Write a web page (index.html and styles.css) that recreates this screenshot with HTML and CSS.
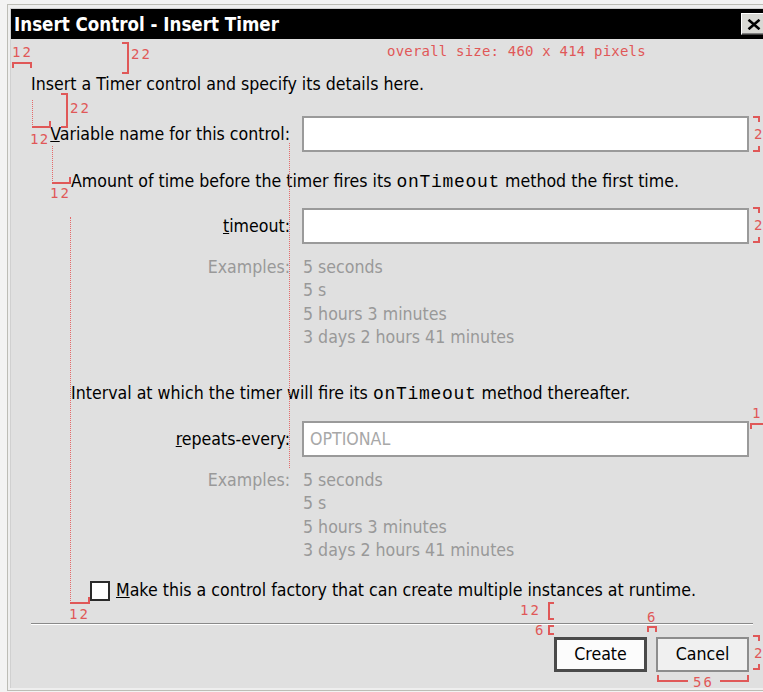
FILE: index.html
```html
<!DOCTYPE html>
<html lang="en">
<head>
<meta charset="utf-8">
<title>Insert Control - Insert Timer</title>
<link rel="stylesheet" href="styles.css">
</head>
<body>
<div class="screen">
  <div class="window">
    <div class="dialog">
      <div class="titlebar">
        <span class="title">Insert Control - Insert Timer</span>
        <button class="close" type="button" aria-label="Close">
          <svg width="14" height="11" viewBox="0 0 14 11"><path d="M1.5 0.8 L12.5 10.2 M12.5 0.8 L1.5 10.2" stroke="#000" stroke-width="2.6" fill="none"/></svg>
        </button>
      </div>

      <div class="content">
        <p class="intro">Insert a Timer control and specify its details here.</p>

        <div class="field field-name">
          <label class="field-label" for="var-name"><u>V</u>ariable name for this control:</label>
          <input class="text-input" id="var-name" type="text">
        </div>

        <p class="section section-first">Amount of time before the timer fires its <code>onTimeout</code> method the first time.</p>

        <div class="field field-timeout">
          <label class="field-label" for="timeout"><u>t</u>imeout:</label>
          <input class="text-input" id="timeout" type="text">
          <span class="examples-label">Examples:</span>
          <ul class="examples">
            <li>5 seconds</li>
            <li>5 s</li>
            <li>5 hours 3 minutes</li>
            <li>3 days 2 hours 41 minutes</li>
          </ul>
        </div>

        <p class="section section-repeat">Interval at which the timer will fire its <code>onTimeout</code> method thereafter.</p>

        <div class="field field-repeat">
          <label class="field-label" for="repeats"><u>r</u>epeats-every:</label>
          <input class="text-input" id="repeats" type="text" placeholder="OPTIONAL">
          <span class="examples-label">Examples:</span>
          <ul class="examples">
            <li>5 seconds</li>
            <li>5 s</li>
            <li>5 hours 3 minutes</li>
            <li>3 days 2 hours 41 minutes</li>
          </ul>
        </div>

        <label class="factory">
          <span class="checkbox"></span>
          <span><u>M</u>ake this a control factory that can create multiple instances at runtime.</span>
        </label>
      </div>

      <div class="separator"></div>

      <div class="buttons">
        <button class="btn btn-default" type="button">Create</button>
        <button class="btn" type="button">Cancel</button>
      </div>
    </div>
  </div>

  <!-- spacing redlines drawn over the dialog -->
  <div class="redlines" aria-hidden="true">
    <span class="rl-num n-side-title">12</span>
    <span class="rl-br t l r b-side-title"></span>
    <span class="rl-br t r b b-top-title"></span>
    <span class="rl-num n-top-title">22</span>
    <span class="rl-num n-size">overall size: 460 x 414 pixels</span>

    <span class="rl-dot d-intro"></span>
    <span class="rl-br b r b-indent-name"></span>
    <span class="rl-br t r b b-gap-name"></span>
    <span class="rl-num n-gap-name">22</span>
    <span class="rl-num n-indent-name">12</span>

    <span class="rl-dot d-labels"></span>
    <span class="rl-dot d-name"></span>
    <span class="rl-br b r b-indent-section"></span>
    <span class="rl-num n-indent-section">12</span>

    <span class="rl-dot d-section"></span>
    <span class="rl-br b r b-indent-check"></span>
    <span class="rl-num n-indent-check">12</span>

    <span class="rl-num n-sep-above">12</span>
    <span class="rl-br t l b b-sep-above"></span>
    <span class="rl-num n-sep-below">6</span>
    <span class="rl-br t l b b-sep-below"></span>
    <span class="rl-num n-btn-gap">6</span>
    <span class="rl-br t l r b-btn-gap"></span>

    <span class="rl-br t r b-edge-top e-name"></span>
    <span class="rl-num n-edge e-name-n">2</span>
    <span class="rl-br b r b-edge-bottom e-name-b"></span>

    <span class="rl-br t r b-edge-top e-timeout"></span>
    <span class="rl-num n-edge e-timeout-n">2</span>
    <span class="rl-br b r b-edge-bottom e-timeout-b"></span>

    <span class="rl-num n-repeat">1</span>
    <span class="rl-br t l b-repeat"></span>

    <span class="rl-br t r b-edge-top e-btn"></span>
    <span class="rl-num n-edge e-btn-n">2</span>
    <span class="rl-br b r b-edge-bottom e-btn-b"></span>

    <span class="rl-br l b b-width-left"></span>
    <span class="rl-num n-width">56</span>
    <span class="rl-br r b b-width-right"></span>
  </div>
</div>
</body>
</html>
```

FILE: styles.css
```css
* { box-sizing: border-box; }

html, body {
  margin: 0;
  padding: 0;
}

body {
  width: 763px;
  height: 692px;
  overflow: hidden;
  background: #f3f3f3;
  font-family: "DejaVu Sans Condensed", "Liberation Sans", sans-serif;
  font-size: 17.6px;
  line-height: 23px;
  color: #000;
}

.screen {
  position: relative;
  width: 763px;
  height: 692px;
  overflow: hidden;
}

/* window frame */
.window {
  margin: 4px 0 0 7px;
  width: 762px;
  height: 687px;
  border: 1px solid #bdbdb6;
  padding: 3px 0 2px 2px;
  background: #efefef;
  display: flex;
}

.dialog {
  width: 758px;
  border-top: 1px solid #d0d0d0;
  border-left: 1px solid #d0d0d0;
  background: #e0e0e0;
  display: flex;
  flex-direction: column;
}

.titlebar {
  height: 30px;
  flex: none;
  background: #000;
  color: #fff;
  display: flex;
  align-items: center;
  justify-content: space-between;
  padding: 0 1px 0 3px;
  font-weight: bold;
  font-size: 18.6px;
}

.close {
  width: 26px;
  height: 22px;
  padding: 0;
  border: 1px solid;
  border-color: #fff #404040 #404040 #fff;
  box-shadow: inset -1px -1px 0 #808080;
  background: #d8d8d4;
  display: flex;
  align-items: center;
  justify-content: center;
}

.close svg { display: block; margin-top: 1px; }

/* form body */
.content {
  padding: 34px 19px 0 20px;
}

.content p { margin: 0; }

.intro { margin-bottom: 20px !important; }

.section { margin-left: 40px !important; }
.section-first { margin-top: 18px !important; }
.section-repeat { margin-top: 33px !important; }

code {
  font-family: "Liberation Mono", "DejaVu Sans Mono", monospace;
  font-size: 18px;
  letter-spacing: 0.7px;
}

.field {
  display: grid;
  grid-template-columns: 259px 447px;
  column-gap: 12px;
  row-gap: 12px;
  align-items: center;
}

.field-timeout { margin-top: 14px; }
.field-repeat { margin-top: 15px; }

.field-label {
  justify-self: end;
  white-space: nowrap;
}

.text-input {
  height: 36px;
  width: 447px;
  margin: 0;
  border: 2px solid #9a9a9a;
  background: #fff;
  padding: 0 6px;
  font: inherit;
  color: #000;
  outline: none;
}

.text-input::placeholder { color: #a8a8a8; }

.examples-label {
  align-self: start;
  justify-self: end;
  color: #999;
}

.examples {
  align-self: start;
  margin: 0;
  padding: 0 0 0 1px;
  list-style: none;
  color: #999;
  line-height: 23.3px;
}

.factory {
  display: flex;
  align-items: center;
  gap: 6px;
  margin: 17px 0 0 59px;
}

.checkbox {
  width: 20px;
  height: 20px;
  flex: none;
  border: 2px solid #2a2a2a;
  background: #fff;
}

.separator {
  height: 2px;
  margin: 21px 15px 0 20px;
  border-top: 1px solid #8a8a8a;
  border-bottom: 1px solid #fff;
}

.buttons {
  display: flex;
  justify-content: flex-end;
  gap: 9px;
  margin-top: 12px;
  padding-right: 19px;
}

.btn {
  width: 93px;
  height: 35px;
  margin: 0;
  padding: 0;
  font: inherit;
  color: #000;
  background: #f0f0f0;
  border: 2px solid #8c8c8c;
}

.btn-default {
  background: #fcfcfc;
  border: 3px solid #4a4a4a;
}

/* redlines */
.redlines {
  position: absolute;
  inset: 0;
  pointer-events: none;
}

.rl-num {
  position: absolute;
  font-family: "DejaVu Sans Mono", "Liberation Mono", monospace;
  font-size: 14px;
  line-height: 14px;
  letter-spacing: 2px;
  color: #e05858;
  white-space: nowrap;
}

.rl-br {
  position: absolute;
  border: 0 solid #e05858;
}
.rl-br.t { border-top-width: 2px; }
.rl-br.r { border-right-width: 2px; }
.rl-br.b { border-bottom-width: 2px; }
.rl-br.l { border-left-width: 2px; }

.rl-dot {
  position: absolute;
  width: 0;
  border-left: 1px dotted #e46a6a;
}

.n-side-title { left: 12px; top: 45px; }
.b-side-title { left: 12px; top: 62px; width: 20px; height: 6px; }
.b-top-title { left: 122px; top: 42px; width: 7px; height: 32px; }
.n-top-title { left: 131px; top: 47px; }
.n-size { left: 387px; top: 44px; letter-spacing: 0.2px; }

.d-intro { left: 32px; top: 100px; height: 27px; }
.b-indent-name { left: 32px; top: 121px; width: 19px; height: 7px; }
.b-gap-name { left: 61px; top: 93px; width: 7px; height: 35px; }
.n-gap-name { left: 70px; top: 101px; }
.n-indent-name { left: 30px; top: 132px; letter-spacing: 1.2px; }

.d-labels { left: 289px; top: 143px; height: 325px; }
.d-name { left: 52px; top: 146px; height: 37px; }
.b-indent-section { left: 52px; top: 177px; width: 19px; height: 7px; }
.n-indent-section { left: 50px; top: 186px; }

.d-section { left: 70px; top: 217px; height: 386px; }
.b-indent-check { left: 70px; top: 597px; width: 20px; height: 7px; }
.n-indent-check { left: 69px; top: 607px; }

.n-sep-above { left: 520px; top: 603px; }
.b-sep-above { left: 548px; top: 602px; width: 6px; height: 18px; }
.n-sep-below { left: 535px; top: 623px; }
.b-sep-below { left: 548px; top: 625px; width: 6px; height: 10px; }
.n-btn-gap { left: 647px; top: 610px; }
.b-btn-gap { left: 647px; top: 626px; width: 10px; height: 6px; }

.b-edge-top { left: 753px; width: 7px; height: 6px; }
.b-edge-bottom { left: 753px; width: 7px; height: 6px; }
.n-edge { left: 754px; }

.e-name { top: 116px; }
.e-name-n { top: 127px; }
.e-name-b { top: 146px; }

.e-timeout { top: 207px; }
.e-timeout-n { top: 218px; }
.e-timeout-b { top: 237px; }

.e-btn { top: 635px; }
.e-btn-n { top: 646px; }
.e-btn-b { top: 664px; }

.n-repeat { left: 752px; top: 406px; }
.b-repeat { left: 750px; top: 423px; width: 14px; height: 6px; }

.b-width-left { left: 657px; top: 675px; width: 31px; height: 7px; }
.n-width { left: 693px; top: 675px; }
.b-width-right { left: 720px; top: 675px; width: 29px; height: 7px; }
```
